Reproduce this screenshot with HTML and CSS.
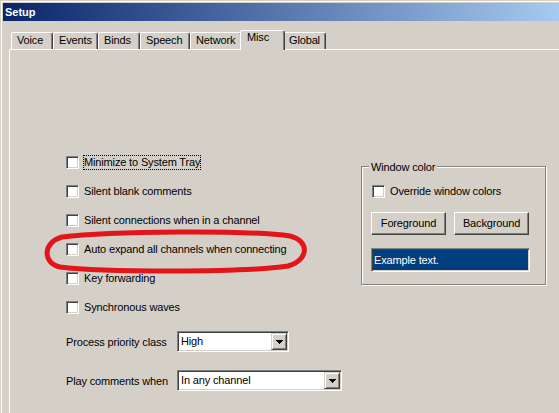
FILE: index.html
```html
<!DOCTYPE html>
<html>
<head>
<meta charset="utf-8">
<title>Setup</title>
<link rel="stylesheet" href="styles.css">
</head>
<body>
<div class="window">
  <div class="titlebar">Setup</div>
  <div class="client">
    <div class="tabs">
      <div class="tab w42">Voice</div>
      <div class="tab w45">Events</div>
      <div class="tab w42">Binds</div>
      <div class="tab w50">Speech</div>
      <div class="tab w52">Network</div>
      <div class="tab sel">Misc</div>
      <div class="tab w43">Global</div>
    </div>
    <div class="panel">
      <div class="left">
        <div class="check"><span class="box"></span><span class="lbl focus">Minimize to System Tray</span></div>
        <div class="check"><span class="box"></span><span class="lbl">Silent blank comments</span></div>
        <div class="check"><span class="box"></span><span class="lbl">Silent connections when in a channel</span></div>
        <div class="check"><span class="box"></span><span class="lbl">Auto expand all channels when connecting</span></div>
        <div class="check"><span class="box"></span><span class="lbl">Key forwarding</span></div>
        <div class="check"><span class="box"></span><span class="lbl">Synchronous waves</span></div>
        <div class="fields">
          <span class="flabel">Process priority class</span>
          <div class="combo c-high"><span class="ctext">High</span><span class="ddbtn"><svg width="7" height="4" viewBox="0 0 7 4" shape-rendering="crispEdges"><rect x="0" y="0" width="7" height="1"/><rect x="1" y="1" width="5" height="1"/><rect x="2" y="2" width="3" height="1"/><rect x="3" y="3" width="1" height="1"/></svg></span></div>
          <span class="flabel">Play comments when</span>
          <div class="combo c-play"><span class="ctext">In any channel</span><span class="ddbtn"><svg width="7" height="4" viewBox="0 0 7 4" shape-rendering="crispEdges"><rect x="0" y="0" width="7" height="1"/><rect x="1" y="1" width="5" height="1"/><rect x="2" y="2" width="3" height="1"/><rect x="3" y="3" width="1" height="1"/></svg></span></div>
        </div>
      </div>
      <div class="group">
        <span class="gtitle">Window color</span>
        <div class="check gcheck"><span class="box"></span><span class="lbl">Override window colors</span></div>
        <div class="btnrow">
          <div class="btn">Foreground</div>
          <div class="btn">Background</div>
        </div>
        <div class="example">Example text.</div>
      </div>
    </div>
  </div>
</div>
<svg class="annot" width="559" height="413" viewBox="0 0 559 413">
  <path d="M 62,237 C 110,231 250,230 290,236 C 310,241 309,260 288,266 C 240,273 100,272 60,267 C 42,263 43,242 62,237 Z" fill="none" stroke="#e3151a" stroke-width="5" stroke-linejoin="round"/>
</svg>
</body>
</html>
```
FILE: styles.css
```css
* { box-sizing: border-box; }
html, body { margin: 0; padding: 0; }
body {
  width: 559px;
  height: 413px;
  overflow: hidden;
  position: relative;
  background: #d4d0c8;
  color: #000;
  font-family: "Liberation Sans", Arial, sans-serif;
  font-size: 11px;
  letter-spacing: -0.15px;
}
.window {
  height: 413px;
  overflow: hidden;
  border-top: 1px solid #d4d0c8;
  border-left: 1px solid #d4d0c8;
  box-shadow: inset 1px 1px 0 #fff;
  padding: 2px 0 0 2px;
}
.titlebar {
  height: 18px;
  line-height: 18px;
  padding-left: 2px;
  background: linear-gradient(90deg, #0a246a, #a6caf0);
  color: #fff;
  font-weight: bold;
  letter-spacing: 0;
}
.client { padding: 9px 0 0 6px; }
.tabs {
  display: flex;
  align-items: flex-end;
  height: 20px;
  margin-left: 2px;
  margin-bottom: -1px;
  position: relative;
  z-index: 1;
}
.tab {
  flex: none;
  height: 17px;
  margin-bottom: 1px;
  border: 1px solid;
  border-bottom: 0;
  border-color: #fff #404040 transparent #fff;
  border-radius: 2px 3px 0 0;
  box-shadow: inset -1px 0 0 #808080;
  padding: 1px 0 0 5px;
  line-height: 13px;
  white-space: nowrap;
  overflow: hidden;
  background: #d4d0c8;
}
.w42 { width: 42px; }
.w43 { width: 43px; }
.w45 { width: 45px; }
.w50 { width: 50px; }
.w52 { width: 52px; }
.tab.sel {
  width: 45px;
  height: 20px;
  margin: 0 -2px;
  padding: 0 0 0 6px;
  z-index: 2;
}
.panel {
  display: flex;
  height: 364px;
  border-top: 1px solid #fff;
  border-left: 1px solid #fff;
}
.left {
  flex: none;
  width: 351px;
  padding: 98px 0 0 56px;
}
.check {
  display: flex;
  align-items: center;
  gap: 5px;
  height: 29px;
  line-height: 13px;
}
.box {
  flex: none;
  width: 13px;
  height: 13px;
  background: #fff;
  border: 1px solid;
  border-color: #808080 #fff #fff #808080;
  box-shadow: inset 1px 1px 0 #404040, inset -1px -1px 0 #d4d0c8;
}
.lbl { white-space: nowrap; }
.focus { outline: 1px dotted #000; }
.fields {
  display: grid;
  grid-template-columns: 111px max-content;
  align-items: center;
  row-gap: 18px;
  margin-top: 9px;
}
.flabel { white-space: nowrap; }
.combo {
  display: flex;
  height: 21px;
  padding: 1px;
  background: #fff;
  border: 1px solid;
  border-color: #808080 #fff #fff #808080;
  box-shadow: inset 1px 1px 0 #404040, inset -1px -1px 0 #d4d0c8;
}
.c-high { width: 112px; }
.c-play { width: 165px; }
.ctext {
  flex: 1;
  padding-left: 2px;
  line-height: 17px;
  white-space: nowrap;
}
.ddbtn {
  flex: none;
  display: flex;
  align-items: center;
  justify-content: center;
  width: 16px;
  height: 17px;
  background: #d4d0c8;
  border: 1px solid;
  border-color: #d4d0c8 #404040 #404040 #d4d0c8;
  box-shadow: inset 1px 1px 0 #fff, inset -1px -1px 0 #808080;
}
.ddbtn svg { display: block; fill: #000; }
.group {
  flex: none;
  display: flex;
  flex-direction: column;
  align-items: flex-start;
  width: 185px;
  height: 119px;
  margin-top: 116px;
  padding-left: 9px;
  border: 1px solid #808080;
  box-shadow: 1px 1px 0 #fff, inset 1px 1px 0 #fff;
}
.gtitle {
  height: 13px;
  line-height: 13px;
  margin: -6px 0 0 -2px;
  padding: 0 2px;
  background: #d4d0c8;
  white-space: nowrap;
}
.gcheck {
  height: 13px;
  margin: 11px 0 0 1px;
}
.btnrow {
  display: flex;
  gap: 8px;
  margin-top: 14px;
}
.btn {
  display: flex;
  align-items: center;
  justify-content: center;
  width: 75px;
  height: 23px;
  background: #d4d0c8;
  border: 1px solid;
  border-color: #fff #404040 #404040 #fff;
  box-shadow: inset -1px -1px 0 #808080;
  line-height: 13px;
}
.example {
  width: 159px;
  height: 24px;
  margin-top: 13px;
  padding: 1px 0 0 2px;
  background: #003e7e;
  color: #fff;
  line-height: 20px;
  border: 1px solid;
  border-color: #808080 #fff #fff #808080;
  box-shadow: inset 1px 1px 0 #404040, inset -1px -1px 0 #d4d0c8;
}
.annot {
  position: absolute;
  left: 0;
  top: 0;
  pointer-events: none;
}
```
